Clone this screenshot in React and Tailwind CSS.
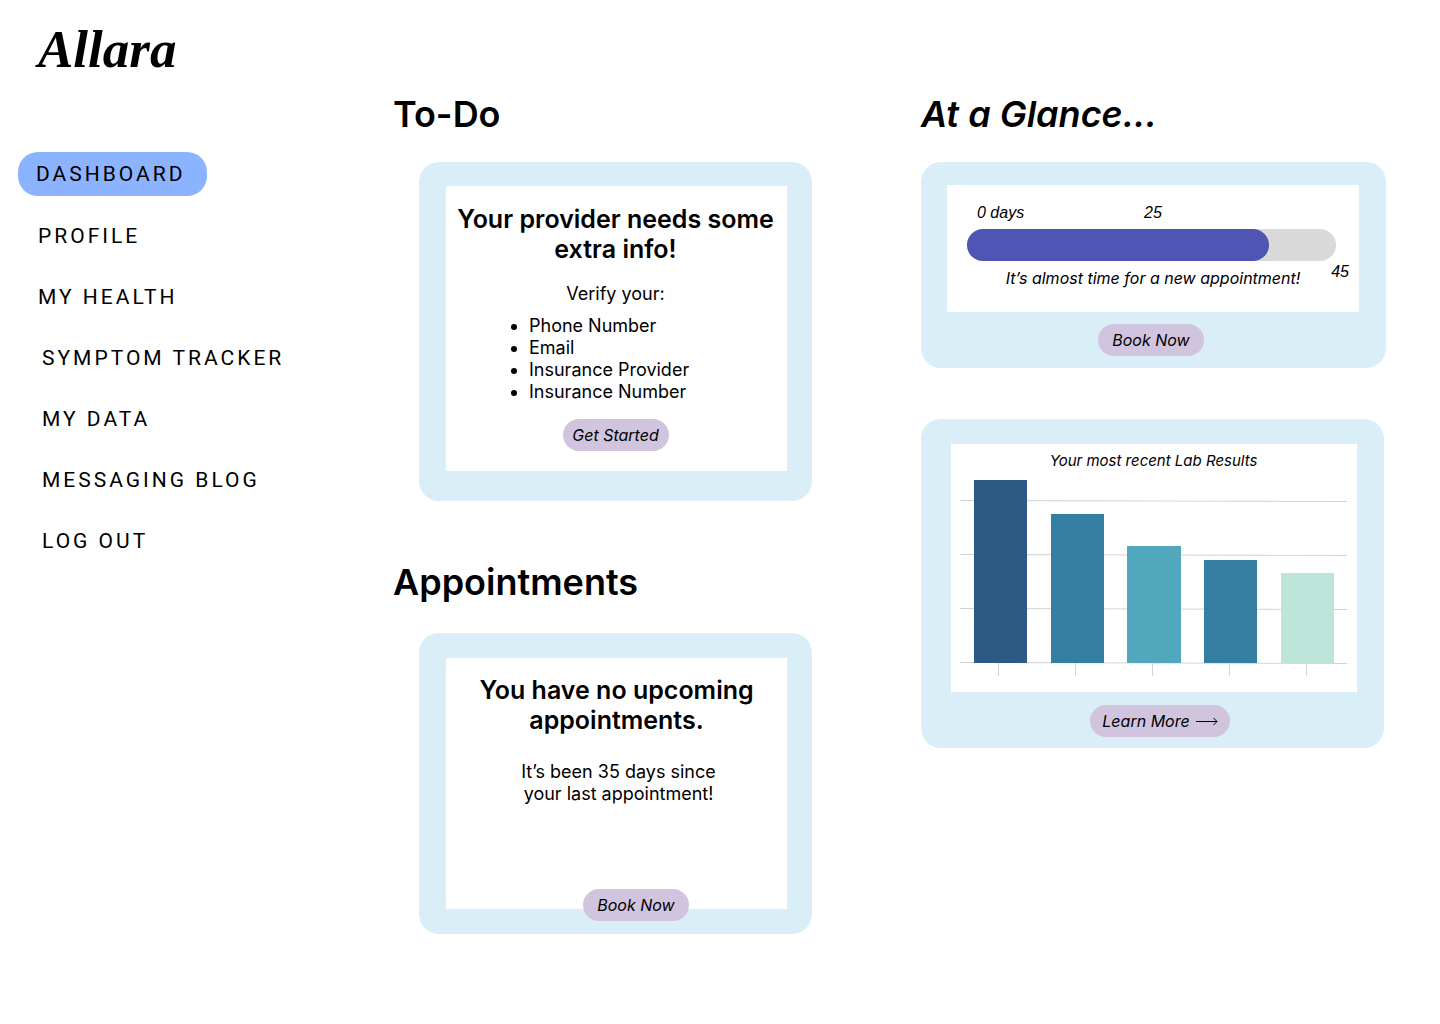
const navGroups = [
  { inset: 'pl-5', items: ['PROFILE', 'MY HEALTH'] },
  { inset: 'pl-6', items: ['SYMPTOM TRACKER', 'MY DATA', 'MESSAGING BLOG', 'LOG OUT'] },
];

const bars = [
  { x: 14, y: 0, width: 53, color: '#2c5a85' },
  { x: 91, y: 34, width: 53, color: '#347fa1' },
  { x: 167, y: 66, width: 54, color: '#51a7bb' },
  { x: 244, y: 80, width: 53, color: '#347fa1' },
  { x: 321, y: 93, width: 53, color: '#bde5d9' },
];

function Pill({ children, className = '' }) {
  return (
    <button
      type="button"
      className={`flex h-8 items-center justify-center rounded-2xl bg-[#d0c4df] text-base italic whitespace-nowrap ${className}`}
    >
      {children}
    </button>
  );
}

function Sidebar() {
  return (
    <aside className="w-[393px] shrink-0 pl-[18px]">
      <p className="mt-5 pl-5 font-['Liberation_Serif','Times_New_Roman',serif] text-[53px] leading-[58px] font-bold italic">
        Allara
      </p>
      <nav className="mt-[74px] flex flex-col items-start font-['Roboto',sans-serif] text-[21px] tracking-[3px]">
        <a href="#dashboard" aria-current="page" className="mb-[18px] flex h-11 items-center rounded-[20px] bg-[#8cb3ff] pr-[22px] pl-[18px]">
          DASHBOARD
        </a>
        <div className="flex flex-col gap-[17px]">
          {navGroups.map((group) => (
            <div key={group.inset} className={`flex flex-col items-start gap-[17px] ${group.inset}`}>
              {group.items.map((item) => (
                <a key={item} href={`#${item.toLowerCase().replace(' ', '-')}`} className="flex h-11 items-center">
                  {item}
                </a>
              ))}
            </div>
          ))}
        </div>
      </nav>
    </aside>
  );
}

function TodoCard() {
  return (
    <div className="mt-[26px] ml-[26px] rounded-[20px] bg-[#daeef8] pt-6 pr-[25px] pb-[30px] pl-[27px]">
      <div className="bg-white pt-[18px] pr-[2px] pb-5">
        <h3 className="px-2 text-center text-[25px] leading-[30px] font-semibold">
          Your provider needs some extra info!
        </h3>
        <p className="mt-[19px] text-center">Verify your:</p>
        <ul className="mt-[10px] list-disc pl-[83px]">
          <li>Phone Number</li>
          <li>Email</li>
          <li>Insurance Provider</li>
          <li>Insurance Number</li>
        </ul>
        <Pill className="mx-auto mt-4 w-[106px]">Get Started</Pill>
      </div>
    </div>
  );
}

function AppointmentsCard() {
  return (
    <div className="relative mt-[29px] ml-[26px] rounded-[20px] bg-[#daeef8] py-[25px] pr-[25px] pl-[27px]">
      <div className="min-h-[251px] bg-white pt-[17px]">
        <h3 className="text-center text-[25px] leading-[30px] font-semibold">
          You have no upcoming
          <br />
          appointments.
        </h3>
        <p className="mt-[26px] pl-1 text-center">
          It’s been 35 days since
          <br />
          your last appointment!
        </p>
      </div>
      <Pill className="absolute bottom-[13px] left-[164px] w-[106px]">Book Now</Pill>
    </div>
  );
}

function GlanceCard() {
  return (
    <div className="mt-[26px] rounded-[20px] bg-[#daeef8] pt-[23px] pr-[27px] pb-3 pl-[26px]">
      <div className="relative bg-white px-5 pt-[18px] pb-[23px] italic">
        <div className="grid grid-cols-3 font-['Liberation_Sans',Arial,sans-serif] text-base leading-5">
          <span className="pl-[10px]">0 days</span>
          <span className="text-center">25</span>
        </div>
        <div
          role="progressbar"
          aria-label="Days since last appointment"
          aria-valuemin={0}
          aria-valuemax={45}
          aria-valuenow={35}
          className="mt-[6px] mr-[3px] h-8 rounded-full bg-[#d9d9d9]"
        >
          <div className="h-full w-9/11 rounded-full bg-[#4f55b3]" />
        </div>
        <p className="mt-[6px] text-center text-base leading-[22px]">It’s almost time for a new appointment!</p>
        <span className="absolute right-[10px] bottom-[30px] font-['Liberation_Sans',Arial,sans-serif] text-base leading-5">
          45
        </span>
      </div>
      <div className="mt-3 flex justify-center pr-1">
        <Pill className="w-[106px]">Book Now</Pill>
      </div>
    </div>
  );
}

function LabChart() {
  return (
    <svg viewBox="0 0 387 196" className="mt-[10px] block w-full" role="img" aria-label="Bar chart of recent lab results">
      <g stroke="#d2d2df" strokeWidth="1">
        <path d="M0 20.5 L387 21.5" />
        <path d="M0 74.5 L387 75.5" />
        <path d="M0 128.5 L387 129.5" />
        <path d="M0 182.5 L387 183.5" />
      </g>
      {bars.map((bar) => (
        <rect key={bar.x} x={bar.x} y={bar.y} width={bar.width} height={183 - bar.y} fill={bar.color} />
      ))}
      <path d="M38.5 183V196M115.5 183V196M192.5 183V196M269.5 183V196M346.5 183V196" stroke="#d2d2df" />
    </svg>
  );
}

function LabCard() {
  return (
    <div className="mt-[51px] mr-[2px] rounded-[20px] bg-[#daeef8] pt-[25px] pr-[27px] pb-[11px] pl-[30px]">
      <div className="bg-white pt-2 pr-[10px] pb-4 pl-[9px]">
        <h3 className="text-center text-[15px] leading-[18px] italic">Your most recent Lab Results</h3>
        <LabChart />
      </div>
      <div className="mt-[13px] flex justify-center pl-3">
        <Pill className="w-[140px] gap-[6px]">
          Learn More
          <svg width="22" height="9" viewBox="0 0 22 9" fill="none" stroke="#000" strokeWidth="1" aria-hidden="true">
            <path d="M0 4.5H21M17.5 1L21 4.5L17.5 8" />
          </svg>
        </Pill>
      </div>
    </div>
  );
}

export default function App() {
  return (
    <div className="flex min-h-screen bg-white font-['Inter',sans-serif] text-lg leading-[22px] text-black [font-optical-sizing:none]">
      <Sidebar />
      <main className="grid grow grid-cols-[419fr_465fr] items-start gap-[109px] pt-[92px] pr-[54px]">
        <div>
          <section>
            <h2 className="text-4xl leading-[44px] font-semibold">To-Do</h2>
            <TodoCard />
          </section>
          <section className="mt-[59px]">
            <h2 className="text-4xl leading-[44px] font-semibold">Appointments</h2>
            <AppointmentsCard />
          </section>
        </div>
        <section>
          <h2 className="text-4xl leading-[44px] font-semibold italic">At a Glance...</h2>
          <GlanceCard />
          <LabCard />
        </section>
      </main>
    </div>
  );
}
